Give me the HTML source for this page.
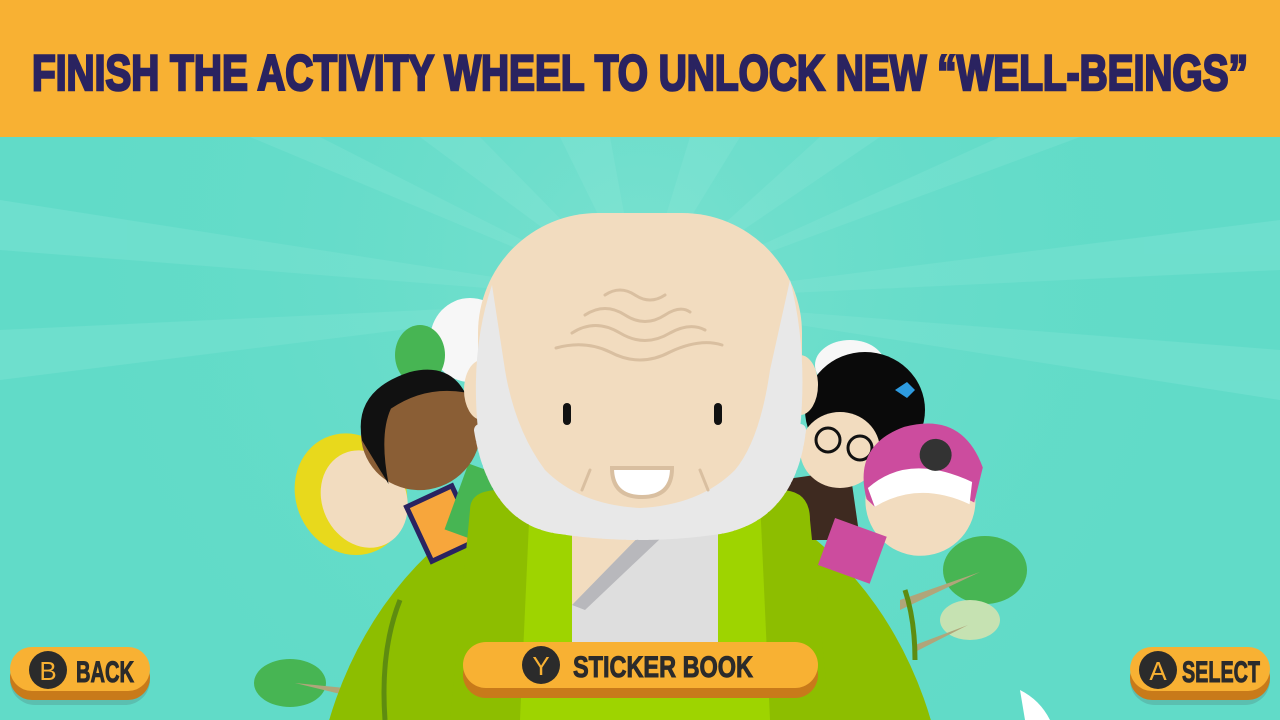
<!DOCTYPE html>
<html><head><meta charset="utf-8"><style>
html,body{margin:0;padding:0;width:1280px;height:720px;overflow:hidden;background:#61DBC8;font-family:"Liberation Sans",sans-serif;position:relative}
svg{position:absolute;left:0;top:0;display:block}
</style></head><body>
<svg width="1280" height="720" viewBox="0 0 1280 720">
<defs>
<radialGradient id="glow" cx="640" cy="260" r="600" gradientUnits="userSpaceOnUse">
<stop offset="0" stop-color="#8FE6D6" stop-opacity="0.5"/><stop offset="1" stop-color="#61DBC8" stop-opacity="0"/></radialGradient>
</defs>
<rect width="1280" height="720" fill="#61DBC8"/>
<g fill="#72E0CF" opacity="0.8">
<path d="M640 300 L420 137 L480 137Z"/><path d="M640 300 L560 137 L610 137Z"/><path d="M640 300 L690 137 L740 137Z"/><path d="M640 300 L820 137 L880 137Z"/><path d="M640 300 L1000 137 L1080 137Z"/><path d="M640 300 L250 137 L320 137Z"/><path d="M640 300 L0 200 L0 250Z"/><path d="M640 300 L1280 220 L1280 270Z"/><path d="M640 300 L0 330 L0 380Z"/><path d="M640 300 L1280 350 L1280 400Z"/>
</g>
<rect width="1280" height="720" fill="url(#glow)"/>
<ellipse cx="290" cy="683" rx="36" ry="24" fill="#47B553"/>
<path d="M295 683 L365 690 L365 700Z" fill="#B0A57A"/>
<ellipse cx="985" cy="570" rx="42" ry="34" fill="#47B553"/>
<ellipse cx="970" cy="620" rx="30" ry="20" fill="#C6E2B2"/>
<path d="M900 600 L980 572 L900 610Z" fill="#B0A57A"/>
<path d="M915 645 L968 625 L915 652Z" fill="#B0A57A"/>
<path d="M1020 690 Q1040 700 1050 720 L1025 720Z" fill="#fff"/>
<ellipse cx="630" cy="840" rx="318" ry="370" fill="#8DBE00"/>
<ellipse cx="640" cy="860" rx="170" ry="330" fill="#9ED400"/>
<path d="M400 600 Q380 650 385 720" stroke="#5E8C10" stroke-width="5" fill="none"/>
<path d="M905 590 Q915 620 915 660" stroke="#5E8C10" stroke-width="5" fill="none"/>
<ellipse cx="470" cy="340" rx="40" ry="42" fill="#F7F7F7"/>
<ellipse cx="420" cy="355" rx="25" ry="30" fill="#47B553"/>
<ellipse cx="850" cy="365" rx="35" ry="25" fill="#F7F7F7"/>
<g transform="rotate(-25 360 490)">
<ellipse cx="350" cy="490" rx="55" ry="62" fill="#E8D91C"/>
<ellipse cx="360" cy="500" rx="42" ry="50" fill="#F2DCBF"/>
<rect x="395" y="525" width="50" height="60" fill="#F7A63C" stroke="#2A2360" stroke-width="5"/>
</g>
<rect x="455" y="470" width="55" height="70" fill="#47B553" transform="rotate(20 480 505)"/>
<g transform="rotate(-20 420 430)">
<ellipse cx="420" cy="432" rx="60" ry="58" fill="#8A5E35"/>
<path d="M362 420 Q370 370 430 372 Q470 376 475 410 Q440 390 400 400 Q380 420 372 470Z" fill="#111"/>
</g>
<path d="M780 480 L850 470 L860 540 L790 540Z" fill="#3E2A20"/>
<ellipse cx="865" cy="410" rx="60" ry="58" fill="#0A0A0A"/>
<ellipse cx="840" cy="450" rx="40" ry="38" fill="#F2DCBF"/>
<path d="M895 390 l12 -8 l0 16z M915 390 l-8 -8 l0 16z" fill="#2E9BE0"/>
<circle cx="828" cy="440" r="12" fill="none" stroke="#111" stroke-width="3"/>
<circle cx="860" cy="448" r="12" fill="none" stroke="#111" stroke-width="3"/>
<g transform="rotate(-20 920 485)">
<ellipse cx="915" cy="500" rx="55" ry="55" fill="#F2DCBF"/>
<path d="M865 480 Q870 425 925 425 Q985 430 985 490 L965 520 Q920 470 870 490Z" fill="#CC4C9E"/>
<path d="M870 470 Q920 450 970 500 L960 520 Q920 480 870 490Z" fill="#fff"/>
<circle cx="945" cy="462" r="16" fill="#333"/>
</g>
<rect x="825" y="525" width="55" height="50" fill="#CC4C9E" transform="rotate(20 850 550)"/>
<path d="M470 510 Q470 490 500 490 L780 490 Q810 490 810 520 L830 720 L450 720Z" fill="#8DBE00"/>
<path d="M530 500 L760 500 L770 720 L520 720Z" fill="#9ED400"/>
<rect x="572" y="500" width="146" height="145" fill="#DEDEDE"/>
<path d="M572 500 L660 500 L660 520 L580 600 L572 605Z" fill="#F2DCBF"/>
<path d="M660 515 L680 520 L585 610 L572 605Z" fill="#B8B8BC"/>
<rect x="478" y="213" width="324" height="300" rx="120" fill="#F2DCBF"/>
<ellipse cx="482" cy="390" rx="18" ry="30" fill="#F2DCBF"/>
<ellipse cx="800" cy="385" rx="18" ry="30" fill="#F2DCBF"/>
<!-- beard -->
<path d="M492 285 Q470 350 478 430 Q490 500 545 520 Q600 535 640 532 Q690 535 740 520 Q795 495 800 430 Q808 350 790 280 L770 370 Q760 440 735 470 Q700 505 640 508 Q580 505 545 470 Q515 430 505 370Z" fill="#E8E8E8"/>
<path d="M480 430 Q495 520 560 528 Q640 540 720 528 Q790 515 800 430" fill="none" stroke="#E8E8E8" stroke-width="12" stroke-dasharray="9 3" stroke-linecap="round"/>
<g fill="none" stroke="#D9BFA0" stroke-width="3" stroke-linecap="round">
<path d="M605 295 Q620 285 635 295 Q650 305 665 295"/>
<path d="M585 315 Q605 302 625 315 Q645 328 665 315 Q680 305 690 312"/>
<path d="M572 333 Q595 318 620 333 Q645 348 670 333 Q690 322 705 330"/>
<path d="M556 348 Q585 340 610 352 Q640 368 670 352 Q700 338 722 345"/>
<path d="M590 470 L582 490"/><path d="M700 470 L708 490"/>
</g>
<rect x="563" y="403" width="8" height="22" rx="4" fill="#111"/>
<rect x="714" y="403" width="8" height="22" rx="4" fill="#111"/>
<path d="M612 468 L672 468 Q672 497 642 497 Q612 497 612 468Z" fill="#fff" stroke="#D9BFA0" stroke-width="4"/>
</svg>
<div style="position:absolute;left:0;top:0;width:1280px;height:137px;background:#F8B133"></div>
<svg width="1280" height="137" style="position:absolute;left:0;top:0">
<text x="32" y="90" textLength="1216" lengthAdjust="spacingAndGlyphs" font-family="Liberation Sans, sans-serif" font-weight="bold" font-size="50" fill="#2A2360" stroke="#2A2360" stroke-width="2.5">FINISH THE ACTIVITY WHEEL TO UNLOCK NEW “WELL-BEINGS”</text>
</svg>
<svg width="1280" height="720" style="position:absolute;left:0;top:0">
<g>
<rect x="10" y="655" width="140" height="50" rx="25" fill="#5BBFB0"/>
<rect x="10" y="655" width="140" height="45" rx="22" fill="#C87A1A"/>
<rect x="10" y="647" width="140" height="44" rx="22" fill="#F8B133"/>
<ellipse cx="48" cy="670" rx="19" ry="19" fill="#2B2B2B"/>
<text x="48" y="680" text-anchor="middle" font-size="26" fill="#F8B133" font-family="Liberation Sans">B</text>
<text x="76" y="682" textLength="58" lengthAdjust="spacingAndGlyphs" font-size="30" font-weight="bold" fill="#2B2B2B" stroke="#2B2B2B" stroke-width="1" font-family="Liberation Sans">BACK</text>
</g>
<g>
<rect x="463" y="652" width="355" height="46" rx="23" fill="#C87A1A"/>
<rect x="463" y="642" width="355" height="46" rx="23" fill="#F8B133"/>
<ellipse cx="541" cy="665" rx="19" ry="19" fill="#2B2B2B"/>
<text x="541" y="675" text-anchor="middle" font-size="26" fill="#F8B133" font-family="Liberation Sans">Y</text>
<text x="573" y="677" textLength="180" lengthAdjust="spacingAndGlyphs" font-size="30" font-weight="bold" fill="#2B2B2B" stroke="#2B2B2B" stroke-width="1" font-family="Liberation Sans">STICKER BOOK</text>
</g>
<g>
<rect x="1130" y="655" width="140" height="50" rx="25" fill="#5BBFB0"/>
<rect x="1130" y="655" width="140" height="45" rx="22" fill="#C87A1A"/>
<rect x="1130" y="647" width="140" height="44" rx="22" fill="#F8B133"/>
<ellipse cx="1158" cy="670" rx="19" ry="19" fill="#2B2B2B"/>
<text x="1158" y="680" text-anchor="middle" font-size="26" fill="#F8B133" font-family="Liberation Sans">A</text>
<text x="1182" y="682" textLength="78" lengthAdjust="spacingAndGlyphs" font-size="30" font-weight="bold" fill="#2B2B2B" stroke="#2B2B2B" stroke-width="1" font-family="Liberation Sans">SELECT</text>
</g>
</svg>
</body></html>
